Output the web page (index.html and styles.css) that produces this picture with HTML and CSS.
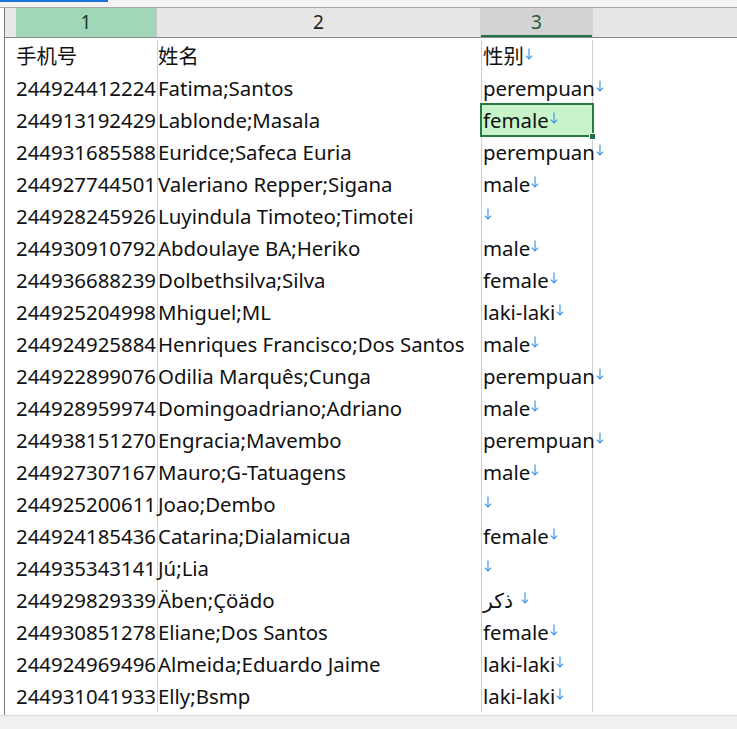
FILE: index.html
```html
<!DOCTYPE html>
<html>
<head>
<meta charset="utf-8">
<link rel="stylesheet" href="styles.css">
</head>
<body>
<div class="tabbar"><div class="tab-ind"></div></div>
<div class="sheet">
  <div class="grid head">
    <div class="stub"></div>
    <div class="hc hc-green">1</div>
    <div class="hc">2</div>
    <div class="hc hc-sel">3</div>
    <div class="hc hc-rest"></div>
  </div>
  <div class="body" id="body"></div>
</div>
<div class="bottombar"></div>
<script src="app.js"></script>
</body>
</html>
```
FILE: app.js
```js
const rows = [
  ["手机号","姓名","性别"],
  ["244924412224","Fatima;Santos","perempuan"],
  ["244913192429","Lablonde;Masala","female"],
  ["244931685588","Euridce;Safeca Euria","perempuan"],
  ["244927744501","Valeriano Repper;Sigana","male"],
  ["244928245926","Luyindula Timoteo;Timotei",""],
  ["244930910792","Abdoulaye BA;Heriko","male"],
  ["244936688239","Dolbethsilva;Silva","female"],
  ["244925204998","Mhiguel;ML","laki-laki"],
  ["244924925884","Henriques Francisco;Dos Santos","male"],
  ["244922899076","Odilia Marquês;Cunga","perempuan"],
  ["244928959974","Domingoadriano;Adriano","male"],
  ["244938151270","Engracia;Mavembo","perempuan"],
  ["244927307167","Mauro;G-Tatuagens","male"],
  ["244925200611","Joao;Dembo",""],
  ["244924185436","Catarina;Dialamicua","female"],
  ["244935343141","Jú;Lia",""],
  ["244929829339","Äben;Çöädo","ذكر"],
  ["244930851278","Eliane;Dos Santos","female"],
  ["244924969496","Almeida;Eduardo Jaime","laki-laki"],
  ["244931041933","Elly;Bsmp","laki-laki"]
];
const arrow = '<svg class="arr" width="8" height="12" viewBox="0 0 8 12"><path d="M4 0.5V11M0.8 7.6L4 11L7.2 7.6" fill="none" stroke="#3f95e6" stroke-width="1.15"/></svg>';
const body = document.getElementById('body');
rows.forEach((r, i) => {
  const row = document.createElement('div');
  row.className = 'grid row';
  const sel = i === 2 ? ' sel' : '';
  const ar = /[\u0600-\u06FF]/.test(r[2]) ? ' ar' : '';
  row.innerHTML = '<div class="stub"></div>' +
    '<div class="c c1">' + r[0] + '</div>' +
    '<div class="c c2">' + r[1] + '</div>' +
    '<div class="c c3' + sel + '"><span class="t' + ar + '">' + (r[2] ? '<bdi>' + r[2] + '</bdi>' : '') + '</span>' + arrow + (sel ? '<span class="handle"></span>' : '') + '</div>' +
    '<div class="c c4"></div>';
  body.appendChild(row);
});
```
FILE: styles.css
```css
html, body {
  margin: 0;
  padding: 0;
  background: #ffffff;
}
body {
  width: 737px;
  height: 729px;
  overflow: hidden;
  font-family: "Noto Sans", "Noto Sans CJK SC", "DejaVu Sans", sans-serif;
  color: #111;
}
.tabbar {
  height: 7px;
  background: #f3f3f3;
  border-bottom: 1px solid #a8a8a8;
}
.tab-ind {
  width: 108px;
  height: 2px;
  background: #1a73d9;
}
.sheet {
  margin-left: 4px;
  border-left: 1px solid #7c7c7c;
  height: 707px;
  overflow: hidden;
}
.grid {
  display: grid;
  grid-template-columns: 11px 141px 324px 112px 1fr;
}
.head {
  height: 30px;
  background: #e6e6e6;
  border-bottom: 1px solid #8a8a8a;
  box-sizing: border-box;
}
.head .stub { background: #e9e9e9; }
.hc {
  display: flex;
  align-items: center;
  justify-content: center;
  font-size: 19px;
  color: #222;
  border-right: 1px solid #d4d4d4;
  padding-bottom: 1px;
}
.hc-green { background: #a0d7b8; border-right-color: #c8c8c8; color: #1d3a2a; }
.hc-sel { background: #d3d3d3; color: #1d5b3a; box-shadow: inset 0 -2px 0 #217346; }
.hc-rest { border-right: none; }
.body { padding-top: 2px; }
.row {
  height: 32px;
}
.c {
  font-size: 20.4px;
  line-height: 32px;
  white-space: nowrap;
  position: relative;
}
.c1 { padding-left: 0; }
.c2 { border-left: 1px solid #d0d0d0; padding-left: 0; }
.c3 {
  border-left: 1px solid #d0d0d0;
  border-right: 1px solid #d0d0d0;
  padding-left: 1px;
  display: flex;
  align-items: center;
  overflow: visible;
}
.c3 .t { display: inline-block; flex-shrink: 0; }
.c3 .t.ar { margin-right: 7px; }
.arr { flex-shrink: 0; margin-left: 1px; margin-top: -4px; position: relative; z-index: 3; }
.sel {
  background: #c9f3c9;
  outline: 2px solid #2a7a44;
  outline-offset: -1px;
  z-index: 2;
}
.handle {
  position: absolute;
  right: -4px;
  bottom: -4px;
  width: 7px;
  height: 7px;
  background: #217346;
  border: 1px solid #fff;
  box-sizing: border-box;
}
.bottombar {
  height: 13px;
  background: #f0f0f0;
  border-top: 1px solid #dcdcdc;
}
```
